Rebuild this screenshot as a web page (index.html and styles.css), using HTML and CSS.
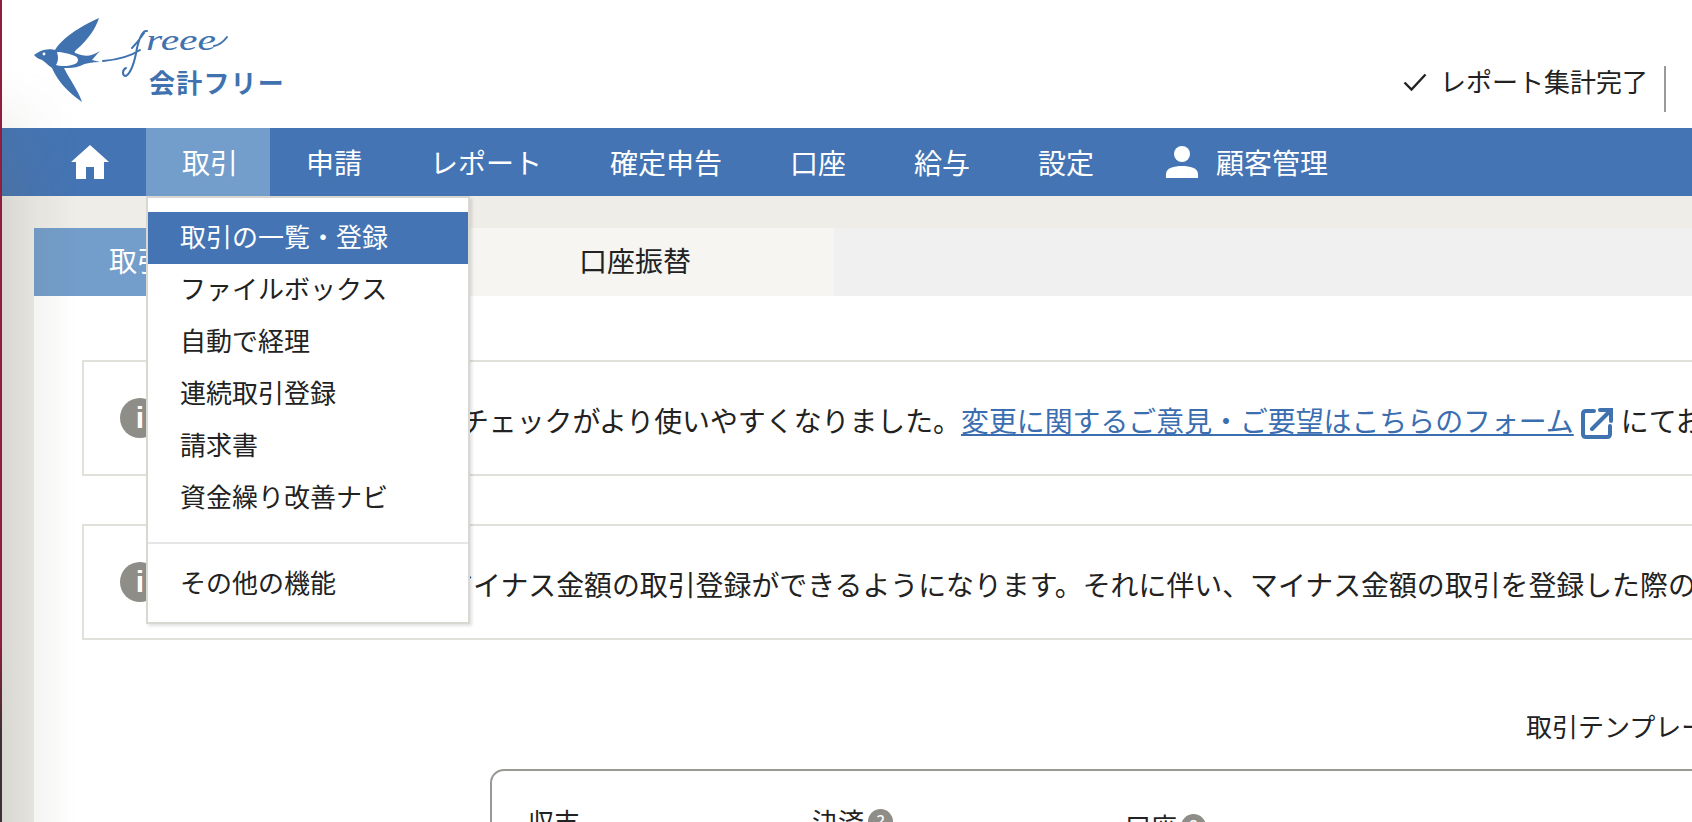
FILE: index.html
```html
<!DOCTYPE html>
<html lang="ja">
<head>
<meta charset="utf-8">
<title>会計フリー</title>
<link rel="stylesheet" href="styles.css">
</head>
<body>
<div class="strip"></div>
<div class="page">
  <header class="header">
    <svg class="logo" width="300" height="128" viewBox="0 0 300 128">
      <path class="logo-fill" d="M34 55 C38 52 42 49.5 47 49.5 C50 49 53 49 55 50 C60 42 72 30 99 18 C96 28 88 40 76 50 C74 52 74 53 78 54 C86 57 92 56 100 51 C96 55 94 58 92 60 L100 62 C92 62 86 63 80 66 C74 68 70 68 64 68 C70 80 78 90 82 102 C68 92 58 82 52 68 C48 65 44 61 42 60 C38 59 36 57 34 55 Z"/>
      <path class="logo-white" d="M57 52 C62 52 70 54 75 56 C79 58 79 62 75 64 C70 66 62 67 56 65 C59 60 58 56 57 52 Z"/>
      <circle class="logo-white" cx="44" cy="54" r="1.4"/>
      <path class="logo-line" d="M103 61 C115 60 128 58 140 50 M132 48 C136 44 142 36 144 33 M214 46 C220 45 224 41 227 37 M147 31 C143 30 140 36 137 48 C135 60 132 72 126 76 C122 76 122 70 126 68"/>
      <text class="logo-script" x="146" y="50" textLength="70" lengthAdjust="spacingAndGlyphs">reee</text>
      <text class="logo-name" x="149" y="93">会計フリー</text>
    </svg>
    <div class="status">
      <svg class="check" width="24" height="20" viewBox="0 0 24 20"><path d="M1.5 10.5 L8.5 17.5 L22.5 2.5"/></svg>
      <span class="status-text">レポート集計完了</span>
      <span class="status-sep"></span>
    </div>
  </header>
  <nav class="nav">
    <a class="nav-item nav-home" aria-label="ホーム">
      <svg width="38" height="34" viewBox="0 0 38 34"><path d="M19 0 L38 17 L33 17 L33 34 L23 34 L23 22 L15 22 L15 34 L5 34 L5 17 L0 17 Z"/></svg>
    </a>
    <div class="nav-item nav-active">取引
      <div class="menu">
        <a class="menu-item menu-current">取引の一覧・登録</a>
        <a class="menu-item">ファイルボックス</a>
        <a class="menu-item">自動で経理</a>
        <a class="menu-item">連続取引登録</a>
        <a class="menu-item">請求書</a>
        <a class="menu-item">資金繰り改善ナビ</a>
        <div class="menu-sep"></div>
        <a class="menu-item">その他の機能</a>
      </div>
    </div>
    <a class="nav-item">申請</a>
    <a class="nav-item">レポート</a>
    <a class="nav-item">確定申告</a>
    <a class="nav-item">口座</a>
    <a class="nav-item">給与</a>
    <a class="nav-item">設定</a>
    <a class="nav-item nav-customer">
      <svg width="32" height="32" viewBox="0 0 32 32"><circle cx="16" cy="8" r="8"/><path d="M0 32 L0 28 C0 22 8 20 16 20 C24 20 32 22 32 28 L32 32 Z"/></svg>
      顧客管理
    </a>
  </nav>
  <main class="main">
    <div class="tabs">
      <div class="tab tab-active">取引を登録する</div>
      <div class="tab tab-second">口座振替</div>
    </div>
    <section class="content">
      <div class="notice">
        <span class="info">i</span>
        <p class="notice-text notice-first">取引一覧画面の取引のチェックがより使いやすくなりました。<a class="link">変更に関するご意見・ご要望はこちらのフォーム</a><svg class="ext" width="32" height="32" viewBox="0 0 32 32"><path class="ext-box" d="M13 3 L5 3 Q2 3 2 6 L2 26 Q2 29 5 29 L26 29 Q29 29 29 26 L29 18"/><path class="ext-box" d="M19 2 L30 2 L30 13 M30 2 L11 21"/></svg>にてお寄せください。</p>
      </div>
      <div class="notice">
        <span class="info">i</span>
        <p class="notice-text notice-second">2023年から、取引でマイナス金額の取引登録ができるようになります。それに伴い、マイナス金額の取引を登録した際の表示が変わります。</p>
      </div>
      <div class="template">取引テンプレート</div>
      <div class="card">
        <div class="field field-type">収支</div>
        <div class="field field-pay">決済<span class="help">?</span></div>
        <div class="field field-account">口座<span class="help">?</span></div>
      </div>
    </section>
  </main>
</div>
<div class="edge-shade"></div>
</body>
</html>
```
FILE: styles.css
```css
* { box-sizing: border-box; }
html, body { height: 100%; }
body {
  margin: 0;
  display: flex;
  overflow: hidden;
  background: #fff;
  color: #222;
  font-family: "Noto Sans CJK JP", "Noto Sans", sans-serif;
  font-size: 26px;
}
a { color: inherit; text-decoration: none; }

.strip {
  flex: 0 0 2px;
  background: linear-gradient(to bottom, #8f1d3d 0, #8f1d3d 78%, #3a3036 90%, #3a3036 100%);
}
.page { flex: 1; min-width: 0; background: #eeede8; }

.header {
  height: 128px;
  display: flex;
  justify-content: space-between;
  background: #fff;
}
.logo { margin-left: -2px; }
.logo-fill { fill: #3f72ae; }
.logo-white { fill: #fff; }
.logo-line { fill: none; stroke: #3f72ae; stroke-width: 2; stroke-linecap: round; }
.logo-script { fill: #3f72ae; font-family: "Liberation Serif", serif; font-style: italic; font-size: 30px; }
.logo-name { fill: #3f72ae; font-size: 26px; font-weight: 700; letter-spacing: 1.2px; }

.status {
  display: flex;
  align-items: center;
  height: 46px;
  margin-top: 66px;
  margin-right: 26px;
}
.check { margin-right: 13px; margin-top: -14px; }
.check path { fill: none; stroke: #222; stroke-width: 2.4; }
.status-text { margin-top: -16px; margin-right: 16px; line-height: 36px; }
.status-sep { width: 2px; height: 46px; background: #9a9a96; }

.nav {
  height: 68px;
  display: flex;
  background: #4474b3;
  color: #fff;
  font-size: 28px;
  white-space: nowrap;
}
.nav-item {
  position: relative;
  display: flex;
  align-items: center;
  padding: 0 32px 0 36px;
}
.nav-item svg { fill: #fff; }
.nav-home { width: 144px; padding: 0 0 0 69px; }
.nav-active { background: #739dca; }
.nav-customer { gap: 18px; padding-left: 40px; }

.menu {
  position: absolute;
  top: 68px;
  left: 0;
  z-index: 5;
  width: 324px;
  padding: 14px 0 12px;
  background: #fff;
  border: 2px solid #d8d7d1;
  box-shadow: 2px 2px 3px rgba(0, 0, 0, .12);
  color: #222;
  font-size: 26px;
}
.menu-item {
  display: flex;
  align-items: center;
  height: 52px;
  padding: 0 0 6px 32px;
}
.menu-current { background: #4474b3; color: #fff; }
.menu-sep { height: 2px; margin: 18px 0 14px; background: #e6e6e6; }

.main { padding-left: 32px; padding-top: 32px; }
.tabs { display: flex; height: 68px; background: #f0f0f0; font-size: 28px; }
.tab { display: flex; align-items: center; width: 398px; padding-bottom: 4px; white-space: nowrap; }
.tab-active { width: 402px; padding-left: 75px; background: #739dca; color: #fff; }
.tab-second { justify-content: center; background: #f6f5f2; }

.content { background: #fff; padding: 64px 0 0 48px; height: 600px; }
.notice {
  display: flex;
  align-items: center;
  gap: 24px;
  width: 1700px;
  height: 116px;
  margin-bottom: 48px;
  padding-left: 36px;
  border: 2px solid #e2e0da;
  white-space: nowrap;
}
.info {
  flex: none;
  width: 40px;
  height: 40px;
  border-radius: 50%;
  background: #8e8d87;
  color: #fff;
  font-family: "Liberation Sans", sans-serif;
  font-size: 30px;
  font-weight: 700;
  line-height: 40px;
  text-align: center;
}
.notice-text { margin: 0; padding-top: 4px; font-size: 27.9px; display: flex; align-items: center; }
.notice-first { margin-left: -2px; }
.notice-second { margin-left: 4px; }
.link { color: #3b6eb0; text-decoration: underline; }
.ext { margin: 8px 8px 0 7px; flex: none; }
.ext-box { fill: none; stroke: #3f72ae; stroke-width: 4; stroke-linecap: round; }

.template { margin-top: 67px; padding-left: 1444px; white-space: nowrap; line-height: 38px; overflow: hidden; }
.card {
  position: relative;
  width: 1300px;
  height: 300px;
  margin: 24px 0 0 408px;
  border: 2px solid #999994;
  border-radius: 14px;
}
.field { position: absolute; display: flex; align-items: center; gap: 4px; line-height: 36px; white-space: nowrap; }
.field-type { left: 36px; top: 32px; }
.field-pay { left: 320px; top: 32px; }
.field-account { left: 633px; top: 37px; }
.help {
  width: 25px;
  height: 25px;
  border-radius: 50%;
  background: #8e8d87;
  color: #fff;
  font-size: 18px;
  line-height: 25px;
  text-align: center;
}

.edge-shade {
  position: fixed;
  left: 2px;
  top: 70px;
  bottom: 0;
  width: 74px;
  pointer-events: none;
  background: linear-gradient(to right, rgba(110, 105, 90, .16) 0, rgba(110, 105, 90, .08) 40%, rgba(110, 105, 90, .05) 60%, rgba(110, 105, 90, 0) 100%);
  -webkit-mask-image: linear-gradient(to bottom, transparent 0, #000 130px);
  mask-image: linear-gradient(to bottom, transparent 0, #000 130px);
}
```
